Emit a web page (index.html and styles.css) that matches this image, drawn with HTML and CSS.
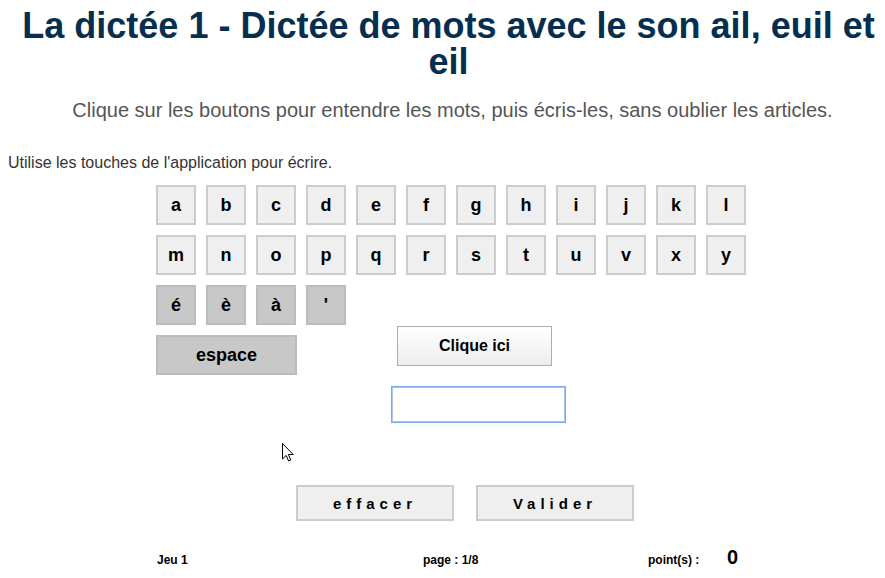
FILE: index.html
```html
<!DOCTYPE html>
<html lang="fr">
<head>
<meta charset="utf-8">
<title>La dictée 1</title>
<link rel="stylesheet" href="styles.css">
</head>
<body>
<h1 class="title">La dictée 1 - Dictée de mots avec le son ail, euil et eil</h1>
<p class="subtitle">Clique sur les boutons pour entendre les mots, puis écris-les, sans oublier les articles.</p>
<p class="hint">Utilise les touches de l'application pour écrire.</p>

<div class="game">
  <div class="row">
    <button class="key">a</button><button class="key">b</button><button class="key">c</button><button class="key">d</button><button class="key">e</button><button class="key">f</button><button class="key">g</button><button class="key">h</button><button class="key">i</button><button class="key">j</button><button class="key">k</button><button class="key">l</button>
  </div>
  <div class="row">
    <button class="key">m</button><button class="key">n</button><button class="key">o</button><button class="key">p</button><button class="key">q</button><button class="key">r</button><button class="key">s</button><button class="key">t</button><button class="key">u</button><button class="key">v</button><button class="key">x</button><button class="key">y</button>
  </div>
  <div class="lower">
    <div class="left-col">
      <div class="row">
        <button class="key dark">é</button><button class="key dark">è</button><button class="key dark">à</button><button class="key dark">'</button>
      </div>
      <div class="row">
        <button class="key dark space">espace</button>
      </div>
    </div>
    <div class="right-col">
      <button class="listen">Clique ici</button>
      <input class="answer" type="text">
    </div>
  </div>
  <div class="actions">
    <button class="action">effacer</button>
    <button class="action">Valider</button>
  </div>
  <div class="footer">
    <span class="f-game">Jeu 1</span>
    <span class="f-page">page : 1/8</span>
    <span class="f-points">point(s) :</span>
    <span class="f-score">0</span>
  </div>
  <svg class="cursor" width="12" height="19" viewBox="0 0 12 19" aria-hidden="true">
    <path d="M0.5 0.5 L0.5 16 L4.2 12.4 L6.6 18 L8.8 17 L6.4 11.5 L11.2 11.5 Z" fill="#fff" stroke="#000" stroke-width="1" stroke-linejoin="miter"/>
  </svg>
</div>
</body>
</html>
```

FILE: styles.css
```css
html {
  overflow: hidden;
}
html, body {
  margin: 0;
  padding: 0;
  background: #ffffff;
}
body {
  margin: 8px 8px 0 8px;
  font-family: "Liberation Sans", Arial, sans-serif;
  color: #000;
}
.title {
  margin: 0;
  padding-left: 12px;
  font-size: 36px;
  line-height: 36px;
  font-weight: bold;
  text-align: center;
  color: #062e4f;
}
.subtitle {
  margin: 19px 0 0 0;
  padding-left: 20px;
  font-size: 20px;
  line-height: 23px;
  text-align: center;
  color: #555;
}
.hint {
  margin: 32px 0 0 0;
  font-size: 16px;
  line-height: 18px;
  color: #333;
}
.game {
  position: relative;
  margin-top: 8px;
  padding-left: 143px;
}
.row {
  display: flex;
}
.key {
  box-sizing: border-box;
  width: 40px;
  height: 40px;
  margin: 5px;
  padding: 0;
  border: 2px solid #cccccc;
  background: #efefef;
  font-family: "Liberation Sans", Arial, sans-serif;
  font-size: 18px;
  font-weight: bold;
  color: #000;
}
.key.dark {
  background: #c8c8c8;
  border-color: #bcbcbc;
}
.key.space {
  width: 141px;
}
.lower {
  display: flex;
}
.left-col {
  width: 240px;
}
.right-col {
  display: flex;
  flex-direction: column;
  align-items: flex-start;
  padding-top: 46px;
}
.listen {
  box-sizing: border-box;
  width: 155px;
  height: 40px;
  margin-left: 6px;
  border: 1px solid #adadad;
  background: linear-gradient(#ffffff, #ececec);
  font-family: "Liberation Sans", Arial, sans-serif;
  font-size: 16px;
  font-weight: bold;
  color: #000;
}
.answer {
  box-sizing: border-box;
  width: 175px;
  height: 37px;
  margin-top: 20px;
  border: 1px solid #7ea7e8;
  outline: 1px solid #a9c6f2;
  outline-offset: -2px;
  background: #fff;
}
.actions {
  display: flex;
  gap: 22px;
  margin-top: 62px;
  padding-left: 145px;
}
.action {
  box-sizing: border-box;
  width: 158px;
  height: 36px;
  border: 2px solid #cccccc;
  background: #efefef;
  font-family: "Liberation Sans", Arial, sans-serif;
  font-size: 15px;
  font-weight: bold;
  letter-spacing: 5px;
  color: #000;
}
.footer {
  display: flex;
  align-items: baseline;
  margin-top: 26px;
  font-size: 12px;
  line-height: 16px;
  font-weight: bold;
  color: #000;
}
.f-game {
  width: 266px;
  padding-left: 6px;
}
.f-page {
  width: 225px;
}
.f-points {
  width: 79px;
}
.f-score {
  font-size: 20px;
  line-height: 20px;
}
.cursor {
  position: absolute;
  left: 274px;
  top: 263px;
}
```
